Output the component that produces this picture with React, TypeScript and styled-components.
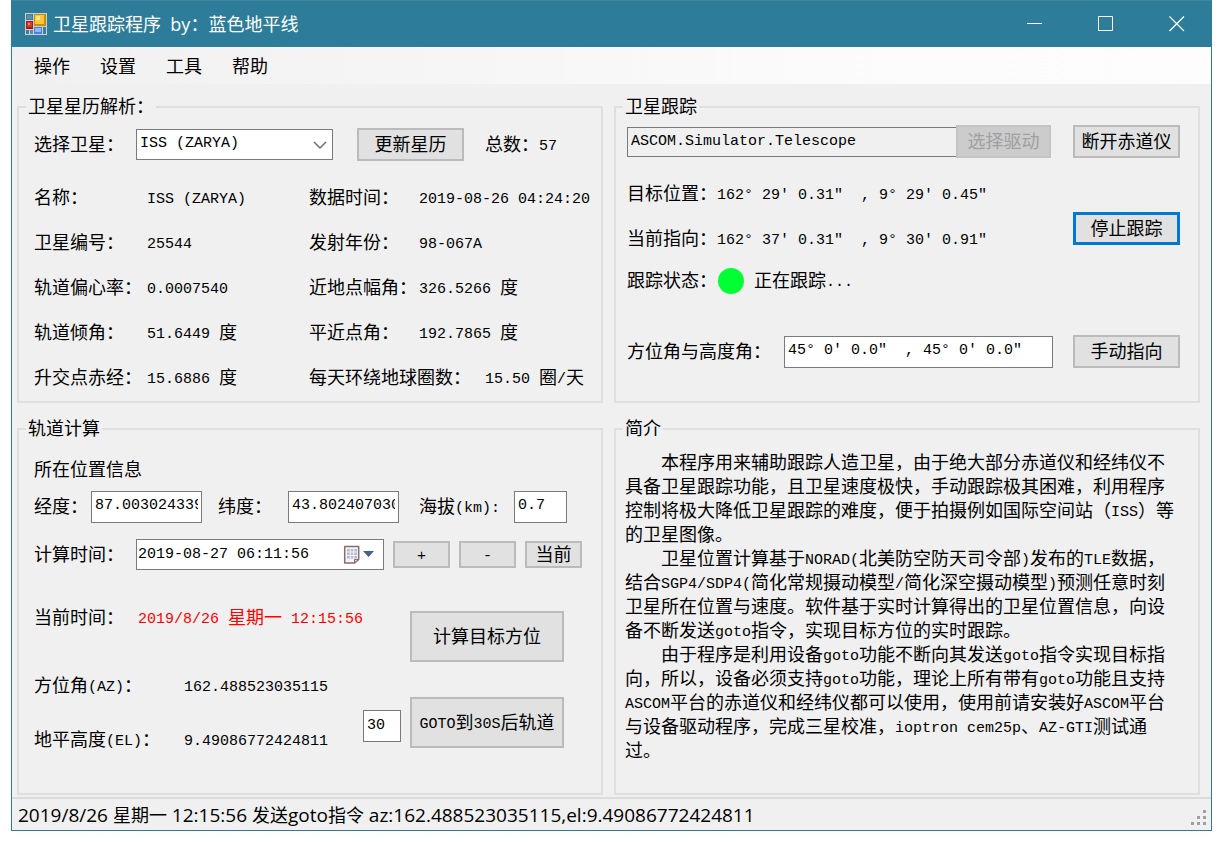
import React from 'react';
import styled, { createGlobalStyle, css } from 'styled-components';

const CJK = '"Noto Sans CJK SC"';
const UI_FONT = `"Open Sans", ${CJK}, sans-serif`;
const FORM_FONT = `"DejaVu Sans Mono", ${CJK}, monospace`;
const LATIN_FONT = `"Liberation Mono", ${CJK}, monospace`;

const GlobalStyle = createGlobalStyle`
  *, *::before, *::after { box-sizing: border-box; }
  body {
    margin: 0;
    background: #fff;
    color: #000;
    font: 18px/24px ${FORM_FONT};
    text-spacing-trim: space-all;
    text-autospace: no-autospace;
  }
  button, input, select { font: inherit; color: inherit; margin: 0; }
`;

const Window = styled.div`
  margin: 0 11px;
  border: 1px solid #2d7d9a;
  border-top: 0;
  background: #f0f0f0;
`;

const TitleBar = styled.header`
  display: flex;
  align-items: center;
  height: 47px;
  padding: 0 10px 0 13px;
  background: #2d7d9a;
  border-top: 1px solid #42859f;
  color: #fff;
  font-family: ${UI_FONT};
`;

const Title = styled.h1`
  flex: 1;
  margin: 0 0 0 6px;
  font-size: 18px;
  font-weight: 400;
  line-height: 24px;
  white-space: pre;
`;

const CaptionButtons = styled.div`
  display: flex;
  gap: 23px;
`;

const CaptionButton = styled.button`
  display: flex;
  align-items: center;
  justify-content: center;
  width: 48px;
  height: 46px;
  padding: 0;
  border: 0;
  background: none;
`;

const MenuStrip = styled.nav`
  display: flex;
  gap: 30px;
  height: 37px;
  padding: 7px 22px 0;
  background: linear-gradient(to right, #f0f0f0, #fcfcfc 75%, #fdfdfd);
  font-family: ${UI_FONT};
`;

const MenuItem = styled.button`
  height: 24px;
  padding: 0;
  border: 0;
  background: none;
  line-height: 24px;
`;

const Main = styled.main`
  display: grid;
  grid-template-columns: minmax(0, 1fr) minmax(0, 1fr);
  gap: 14px 11px;
  padding: 11px 11px 2px 5px;
`;

const Group = styled.fieldset`
  min-width: 0;
  margin: 0;
  padding: 0;
  border: 2px solid #dfdfdf;
`;

const Legend = styled.legend`
  height: 24px;
  margin-left: 7px;
  padding: 0 2px;
`;

const GroupBody = styled.div<{ $pad: string }>`
  padding: ${(p) => p.$pad};
`;

const LatinRun = styled.span`
  font-family: ${LATIN_FONT};
  font-size: 15px;
  line-height: 15px;
  vertical-align: 1px;
`;

const Row = styled.div<{ $h?: number; $gap?: number; $mt?: number }>`
  display: flex;
  align-items: center;
  height: ${(p) => (p.$h ? `${p.$h}px` : 'auto')};
  gap: ${(p) => p.$gap ?? 0}px;
  margin-top: ${(p) => p.$mt ?? 0}px;
  white-space: pre;
`;

const Label = styled.label<{ $w?: number }>`
  flex: none;
  width: ${(p) => (p.$w ? `${p.$w}px` : 'auto')};
  white-space: pre;
`;

const Name = styled.span<{ $w?: number }>`
  flex: none;
  width: ${(p) => (p.$w ? `${p.$w}px` : 'auto')};
  white-space: pre;
`;

const Value = styled.output<{ $red?: boolean }>`
  white-space: pre;
  ${(p) => p.$red && css`color: #f00;`}
`;

const DataTable = styled.div`
  margin-top: 14px;
`;

const DataRow = styled.div<{ $cols: string }>`
  display: grid;
  grid-template-columns: ${(p) => p.$cols};
  align-items: center;
  height: 45px;
  white-space: pre;
`;

const Button = styled.button<{ $w: number; $h?: number; $focus?: boolean }>`
  flex: none;
  width: ${(p) => p.$w}px;
  height: ${(p) => p.$h ?? 33}px;
  padding: 0;
  border: 2px solid #bbbbbb;
  background: #e1e1e1;
  line-height: 24px;
  white-space: nowrap;
  ${(p) => p.$focus && css`border: 3px solid #0078d7;`}
  &:disabled {
    border-color: #c4c4c4;
    background: #cccccc;
    color: #a0a0a0;
  }
`;

const TextBox = styled.input<{ $w?: number; $h?: number }>`
  flex: ${(p) => (p.$w ? 'none' : '1')};
  min-width: 0;
  width: ${(p) => (p.$w ? `${p.$w}px` : 'auto')};
  height: ${(p) => p.$h ?? 32}px;
  padding: 0 3px 2px;
  border: 1px solid #7a7a7a;
  border-radius: 0;
  background: #fff;
  font-family: ${LATIN_FONT};
  font-size: 15px;
  outline: 0;
  &:read-only {
    background: #f0f0f0;
    border-right: 0;
    padding-bottom: 0;
  }
`;

const SelectBox = styled.div`
  position: relative;
  width: 197px;
  height: 31px;
`;

const Select = styled.select`
  display: block;
  appearance: none;
  width: 100%;
  height: 100%;
  padding: 0 24px 2px 3px;
  border: 1px solid #7a7a7a;
  border-radius: 0;
  background: #fff;
  font-family: ${LATIN_FONT};
  font-size: 15px;
`;

const Chevron = styled.svg`
  position: absolute;
  right: 6px;
  top: 12px;
  pointer-events: none;
`;

const DatePicker = styled.div`
  display: flex;
  align-items: center;
  width: 248px;
  height: 31px;
  padding: 0 8px 0 0;
  border: 1px solid #7a7a7a;
  background: #fff;
`;

const DateInput = styled.input`
  flex: 1;
  min-width: 0;
  height: 100%;
  padding: 0 0 0 1px;
  border: 0;
  background: none;
  font-family: ${LATIN_FONT};
  font-size: 15px;
  outline: 0;
`;

const DropButton = styled.button`
  display: flex;
  padding: 0;
  border: 0;
  background: none;
`;

const Split = styled.div<{ $mt: number }>`
  display: flex;
  justify-content: space-between;
  margin-top: ${(p) => p.$mt}px;
`;

const Readings = styled.div`
  flex: 1;
`;

const Actions = styled.div`
  display: flex;
  flex-direction: column;
  align-items: flex-end;
  gap: 35px;
  padding: 20px 37px 0 0;
`;

const BaselineRow = styled.div`
  display: flex;
  align-items: baseline;
  gap: 9px;
`;

const TrackingSide = styled.div`
  padding-top: 41px;
`;

const StatusDot = styled.span`
  width: 26px;
  height: 26px;
  margin-right: 10px;
  border-radius: 50%;
  background: #00ff33;
`;

const Intro = styled.div`
  width: 552px;
  max-width: 100%;
  p { margin: 0; text-indent: 36px; }
`;

const StatusBar = styled.footer`
  display: flex;
  align-items: center;
  justify-content: space-between;
  height: 33px;
  padding: 0 4px 0 6px;
  border-top: 2px solid #dcdcdc;
  font-family: ${UI_FONT};
  white-space: pre;
  ${LatinRun} {
    font-family: ${UI_FONT};
    font-size: 19px;
    vertical-align: baseline;
  }
`;

const Grip = styled.svg`
  align-self: flex-end;
  margin-bottom: 4px;
`;

/* Half-width runs are set in the monospaced Latin face, 9px per character. */
function Mixed({ children }: { children: string }) {
  const parts = children.split(/([\u0020-\u00ff\u2032\u2033]+)/).filter(Boolean);
  return (
    <>
      {parts.map((part, i) =>
        /^[\u0020-\u00ff\u2032\u2033]/.test(part) ? <LatinRun key={i}>{part}</LatinRun> : part,
      )}
    </>
  );
}

const DATA_COLS = '113fr 162fr 110fr 180fr';
const elements = [
  ['名称：', 'ISS (ZARYA)', '数据时间：', '2019-08-26 04:24:20'],
  ['卫星编号：', '25544', '发射年份：', '98-067A'],
  ['轨道偏心率：', '0.0007540', '近地点幅角：', '326.5266 度'],
  ['轨道倾角：', '51.6449 度', '平近点角：', '192.7865 度'],
  ['升交点赤经：', '15.6886 度', '每天环绕地球圈数：', '15.50 圈/天'],
];

const AppIcon = () => (
  <svg width="22" height="22" viewBox="0 0 22 22" aria-hidden="true">
    <rect width="22" height="22" fill="#c9cfd3" />
    <rect x="1" y="1" width="7" height="6" fill="#3d7f9b" />
    <rect x="2" y="2" width="5" height="4" fill="#5c8fa6" />
    <rect x="9" y="1" width="12" height="12" fill="#c98b12" />
    <rect x="10" y="2" width="9" height="9" fill="#fbc935" />
    <rect x="11" y="3" width="4" height="4" fill="#ffe58c" />
    <rect x="1" y="8" width="7" height="8" fill="#a51c14" />
    <rect x="2" y="9" width="5" height="5" fill="#d8382c" />
    <rect x="3" y="10" width="2" height="2" fill="#f08a80" />
    <rect x="1" y="17" width="3" height="4" fill="#3d7f9b" />
    <rect x="5" y="17" width="3" height="4" fill="#5c8fa6" />
    <rect x="9" y="14" width="8" height="7" fill="#4b7fe0" />
    <rect x="10" y="15" width="6" height="4" fill="#8fb6fa" />
    <rect x="18" y="14" width="3" height="7" fill="#3d7f9b" />
  </svg>
);

const CalendarIcon = () => (
  <svg width="32" height="20" viewBox="0 0 32 20" aria-hidden="true">
    <path d="M1.700 1.500h14v13l-4 3.500h-10z" fill="#f4f4f8" stroke="#85706f" strokeWidth="1.500" strokeLinejoin="round" />
    <path d="M4 4h10v9.500H4z" fill="#b4bdcf" />
    <path d="M4 7h10M4 10.500h10M7.300 4v9.500M10.700 4v9.500" stroke="#f2f4f8" strokeWidth="1" />
    <path d="M11.500 18v-3.500h4z" fill="#cfc8cc" stroke="#85706f" />
    <path d="M20 6h11l-5.500 6z" fill="#44618f" />
  </svg>
);

export default function App() {
  return (
    <>
      <GlobalStyle />
      <Window>
        <TitleBar>
          <AppIcon />
          <Title>{'卫星跟踪程序  by：蓝色地平线'}</Title>
          <CaptionButtons>
            <CaptionButton aria-label="最小化">
              <svg width="16" height="16"><path d="M0 7.500h15" stroke="#fff" /></svg>
            </CaptionButton>
            <CaptionButton aria-label="最大化">
              <svg width="16" height="16"><path d="M.5.5h14v14H.5z" fill="none" stroke="#fff" /></svg>
            </CaptionButton>
            <CaptionButton aria-label="关闭">
              <svg width="16" height="16"><path d="M.5.5l14.500 14.500M15 .5L.5 15" fill="none" stroke="#fff" strokeWidth="1.200" /></svg>
            </CaptionButton>
          </CaptionButtons>
        </TitleBar>

        <MenuStrip>
          {['操作', '设置', '工具', '帮助'].map((m) => (
            <MenuItem key={m}>{m}</MenuItem>
          ))}
        </MenuStrip>

        <Main>
          <Group>
            <Legend>卫星星历解析：</Legend>
            <GroupBody $pad="9px 2px 1px 15px">
              <Row $h={33}>
                <Label $w={102} htmlFor="sat">选择卫星：</Label>
                <Row $gap={24}>
                  <SelectBox>
                    <Select id="sat" defaultValue="iss">
                      <option value="iss">ISS (ZARYA)</option>
                    </Select>
                    <Chevron width="14" height="9" viewBox="0 0 14 9">
                      <path d="M1 1l6 6 6-6" fill="none" stroke="#707070" strokeWidth="1.500" />
                    </Chevron>
                  </SelectBox>
                  <Row $gap={21}>
                    <Button $w={107}>更新星历</Button>
                    <span><Mixed>总数：57</Mixed></span>
                  </Row>
                </Row>
              </Row>
              <DataTable>
                {elements.map(([a, b, c, d], i) => (
                  <DataRow key={a} $cols={i === 4 ? '113fr 162fr 176fr 114fr' : DATA_COLS}>
                    <Name>{a}</Name>
                    <Value><Mixed>{b}</Mixed></Value>
                    <Name>{c}</Name>
                    <Value><Mixed>{d}</Mixed></Value>
                  </DataRow>
                ))}
              </DataTable>
            </GroupBody>
          </Group>

          <Group>
            <Legend>卫星跟踪</Legend>
            <GroupBody $pad="6px 18px 0 11px">
              <Row $h={33} $gap={22}>
                <Readings as={Row} $gap={1}>
                  <TextBox $h={30} readOnly aria-label="驱动" defaultValue="ASCOM.Simulator.Telescope" />
                  <Button $w={95} disabled>选择驱动</Button>
                </Readings>
                <Button $w={107}>断开赤道仪</Button>
              </Row>
              <Split $mt={13}>
                <Readings>
                  <Row $h={45}>
                    <Name $w={90}>目标位置：</Name>
                    <Value><Mixed>{'162° 29′ 0.31″  , 9° 29′ 0.45″'}</Mixed></Value>
                  </Row>
                  <Row $h={45}>
                    <Name $w={90}>当前指向：</Name>
                    <Value><Mixed>{'162° 37′ 0.31″  , 9° 30′ 0.91″'}</Mixed></Value>
                  </Row>
                  <Row $h={39}>
                    <Name $w={91}>跟踪状态：</Name>
                    <StatusDot />
                    <Value><Mixed>正在跟踪...</Mixed></Value>
                  </Row>
                </Readings>
                <TrackingSide>
                  <Button $w={107} $focus>停止跟踪</Button>
                </TrackingSide>
              </Split>
              <Row $h={33} $gap={20} $mt={35}>
                <Readings as={Row}>
                  <Label $w={157} htmlFor="azel">方位角与高度角：</Label>
                  <TextBox id="azel" defaultValue={'45° 0′ 0.0″  , 45° 0′ 0.0″'} />
                </Readings>
                <Button $w={107}>手动指向</Button>
              </Row>
            </GroupBody>
          </Group>

          <Group>
            <Legend>轨道计算</Legend>
            <GroupBody $pad="17px 0 26px 15px">
              <Row $h={24}>所在位置信息</Row>
              <Row $h={31} $mt={9}>
                <Label $w={57} htmlFor="lon">经度：</Label>
                <TextBox id="lon" $w={111} defaultValue="87.00302433967" />
                <Name $w={16} />
                <Label $w={70} htmlFor="lat">纬度：</Label>
                <TextBox id="lat" $w={111} defaultValue="43.80240703064" />
                <Name $w={20} />
                <Label $w={95} htmlFor="alt"><Mixed>海拔(km):</Mixed></Label>
                <TextBox id="alt" $w={53} defaultValue="0.7" />
              </Row>
              <Row $h={31} $mt={17}>
                <Label $w={102} htmlFor="time">计算时间：</Label>
                <Row $gap={9}>
                  <DatePicker>
                    <DateInput id="time" defaultValue="2019-08-27 06:11:56" />
                    <DropButton aria-label="选择日期"><CalendarIcon /></DropButton>
                  </DatePicker>
                  <Button $w={57} $h={27}><Mixed>+</Mixed></Button>
                  <Button $w={57} $h={27}><Mixed>-</Mixed></Button>
                  <Button $w={57} $h={27}>当前</Button>
                </Row>
              </Row>
              <Split $mt={21}>
                <Readings>
                  <Row $h={54}>
                    <Name $w={104}>当前时间：</Name>
                    <Value $red><Mixed>2019/8/26 星期一 12:15:56</Mixed></Value>
                  </Row>
                  <Row $h={54} $mt={14}>
                    <Name $w={150}><Mixed>方位角(AZ)：</Mixed></Name>
                    <Value><Mixed>162.488523035115</Mixed></Value>
                  </Row>
                  <Row $h={54}>
                    <Name $w={150}><Mixed>地平高度(EL)：</Mixed></Name>
                    <Value><Mixed>9.49086772424811</Mixed></Value>
                  </Row>
                </Readings>
                <Actions>
                  <Button $w={154} $h={51}>计算目标方位</Button>
                  <BaselineRow>
                    <TextBox $w={38} aria-label="秒数" defaultValue="30" />
                    <Button $w={154} $h={51}><Mixed>GOTO到30S后轨道</Mixed></Button>
                  </BaselineRow>
                </Actions>
              </Split>
            </GroupBody>
          </Group>

          <Group>
            <Legend>简介</Legend>
            <GroupBody $pad="10px 9px 0 9px">
              <Intro>
                <p><Mixed>本程序用来辅助跟踪人造卫星，由于绝大部分赤道仪和经纬仪不具备卫星跟踪功能，且卫星速度极快，手动跟踪极其困难，利用程序控制将极大降低卫星跟踪的难度，便于拍摄例如国际空间站（ISS）等的卫星图像。</Mixed></p>
                <p><Mixed>卫星位置计算基于NORAD(北美防空防天司令部)发布的TLE数据，结合SGP4/SDP4(简化常规摄动模型/简化深空摄动模型)预测任意时刻卫星所在位置与速度。软件基于实时计算得出的卫星位置信息，向设备不断发送goto指令，实现目标方位的实时跟踪。</Mixed></p>
                <p><Mixed>由于程序是利用设备goto功能不断向其发送goto指令实现目标指向，所以，设备必须支持goto功能，理论上所有带有goto功能且支持ASCOM平台的赤道仪和经纬仪都可以使用，使用前请安装好ASCOM平台与设备驱动程序，完成三星校准，ioptron cem25p、AZ-GTI测试通过。</Mixed></p>
              </Intro>
            </GroupBody>
          </Group>
        </Main>

        <StatusBar>
          <span><Mixed>2019/8/26 星期一 12:15:56 发送goto指令 az:162.488523035115,el:9.49086772424811</Mixed></span>
          <Grip width="16" height="16" viewBox="0 0 16 16" aria-hidden="true">
            <g fill="#a0a0a0">
              <rect x="12" y="0" width="3" height="3" />
              <rect x="6" y="6" width="3" height="3" />
              <rect x="12" y="6" width="3" height="3" />
              <rect x="0" y="12" width="3" height="3" />
              <rect x="6" y="12" width="3" height="3" />
              <rect x="12" y="12" width="3" height="3" />
            </g>
          </Grip>
        </StatusBar>
      </Window>
    </>
  );
}
